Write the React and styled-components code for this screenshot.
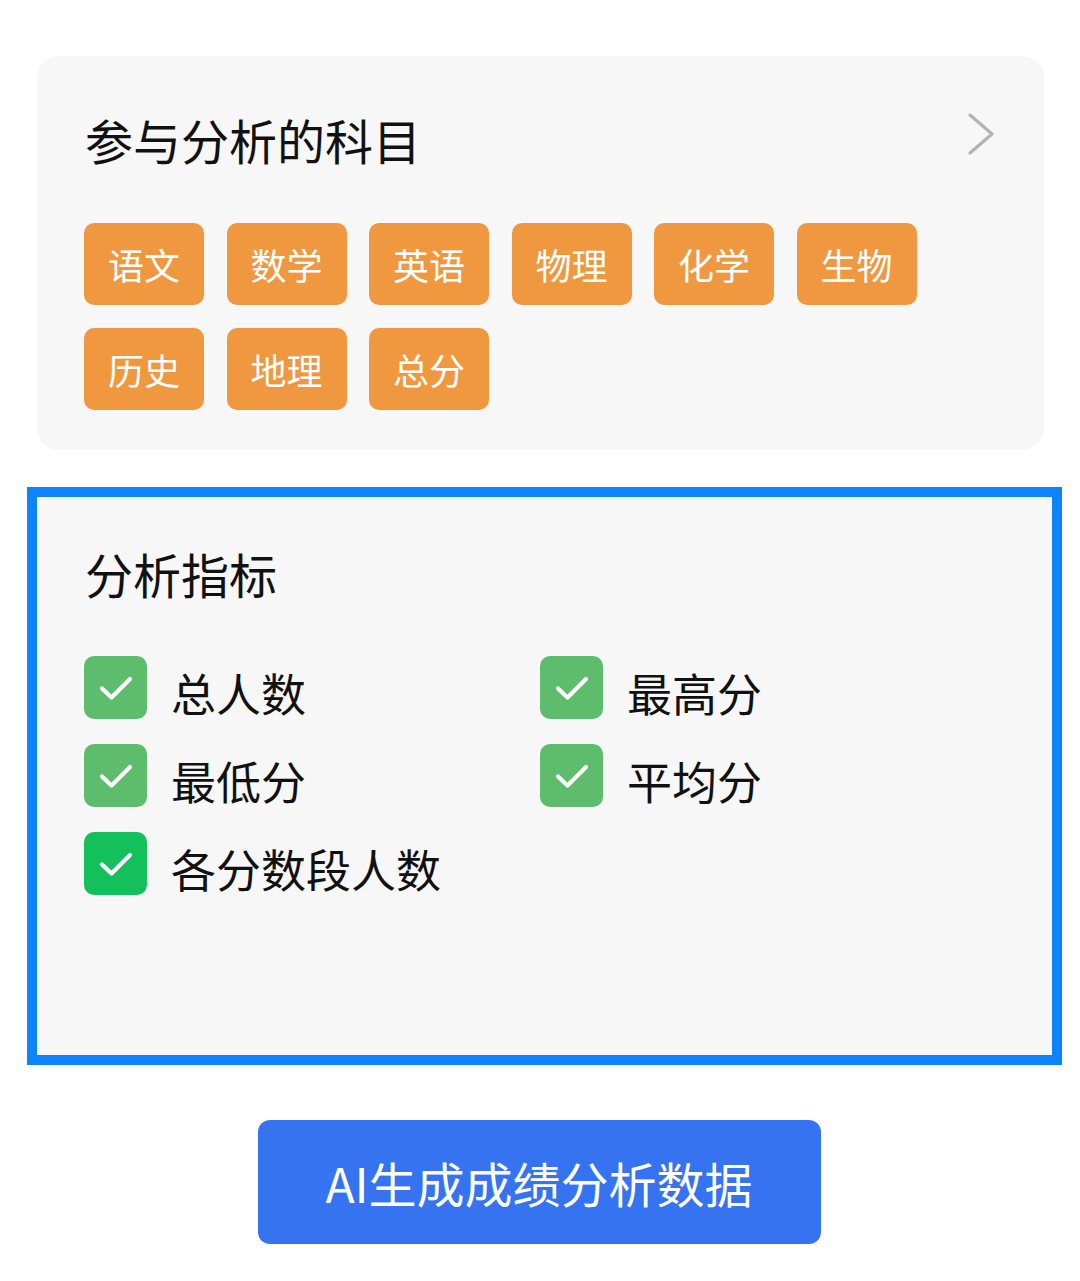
import styled, { createGlobalStyle } from "styled-components";

const subjects = ["语文", "数学", "英语", "物理", "化学", "生物", "历史", "地理", "总分"];
const metrics = [
  { label: "总人数" },
  { label: "最高分" },
  { label: "最低分" },
  { label: "平均分" },
  { label: "各分数段人数", strong: true },
];

function App() {
  return (
    <Page>
      <GlobalStyle />
      <SubjectCard>
        <TitleRow>
          <Title>参与分析的科目</Title>
          <Chevron viewBox="0 0 28 44">
            <path d="M3 3 L25 22 L3 41" fill="none" stroke="#b3b3b3" strokeWidth="3.2" strokeLinecap="round" strokeLinejoin="round" />
          </Chevron>
        </TitleRow>
        <TagList>
          {subjects.map((s) => (
            <Tag key={s}>{s}</Tag>
          ))}
        </TagList>
      </SubjectCard>

      <Highlight>
        <MetricCard>
          <Title>分析指标</Title>
          <MetricGrid>
            {metrics.map((m) => (
              <Metric key={m.label}>
                <Check $strong={m.strong}>
                  <svg width="36" height="28" viewBox="0 0 36 28">
                    <path d="M4 14.5 L13.5 23.5 L32 5" fill="none" stroke="#fff" strokeWidth="4.2" strokeLinecap="round" strokeLinejoin="round" />
                  </svg>
                </Check>
                <MetricLabel>{m.label}</MetricLabel>
              </Metric>
            ))}
          </MetricGrid>
        </MetricCard>
      </Highlight>

      <ButtonRow>
        <Generate>AI生成成绩分析数据</Generate>
      </ButtonRow>
    </Page>
  );
}

export default App;

const GlobalStyle = createGlobalStyle`
  body {
    margin: 0;
    background: #ffffff;
    font-family: "Noto Sans CJK SC", "Noto Sans", sans-serif;
  }
`;
const Page = styled.div`
  width: 1080px;
  min-height: 1281px;
  padding-top: 56px;
  box-sizing: border-box;
  background: #ffffff;
`;
const SubjectCard = styled.div`
  margin: 0 36px 0 37px;
  padding: 54px 49px 40px 47px;
  border-radius: 22px;
  background: #f7f7f7;
`;
const TitleRow = styled.div`
  display: flex;
  align-items: center;
  justify-content: space-between;
`;
const Title = styled.div`
  margin-left: 1px;
  font-size: 48px;
  line-height: 58px;
  color: #111111;
`;
const Chevron = styled.svg`
  width: 28px;
  height: 44px;
  margin-top: -10px;
`;
const TagList = styled.div`
  display: flex;
  flex-wrap: wrap;
  gap: 23px 22.5px;
  margin-top: 55px;
  width: 840px;
`;
const Tag = styled.div`
  width: 120px;
  height: 82px;
  display: flex;
  align-items: center;
  justify-content: center;
  border-radius: 10px;
  background: #f09840;
  color: #ffffff;
  font-size: 36px;
`;
const Highlight = styled.div`
  margin: 37px 18px 0 27px;
  border: 10px solid #0d83fc;
`;
const MetricCard = styled.div`
  min-height: 558px;
  padding: 47px 49px 0 47px;
  box-sizing: border-box;
  background: #f7f7f7;
`;
const MetricGrid = styled.div`
  display: grid;
  grid-template-columns: 456px 1fr;
  row-gap: 25px;
  margin-top: 54px;
`;
const Metric = styled.div`
  display: flex;
  align-items: flex-start;
  gap: 24px;
  height: 63px;
`;
const Check = styled.div`
  width: 63px;
  height: 63px;
  flex-shrink: 0;
  display: flex;
  align-items: center;
  justify-content: center;
  border-radius: 10px;
  background: ${(p) => (p.$strong ? "#14c05b" : "#5dbd6c")};
`;
const MetricLabel = styled.div`
  height: 63px;
  font-size: 45px;
  line-height: 73px;
  color: #111111;
  white-space: nowrap;
`;
const ButtonRow = styled.div`
  display: flex;
  justify-content: center;
  margin-top: 55px;
  padding-right: 2px;
`;
const Generate = styled.button`
  width: 563px;
  height: 124px;
  border: none;
  border-radius: 12px;
  background: #3673f1;
  color: #ffffff;
  font-family: "Noto Sans CJK SC", "Noto Sans", sans-serif;
  font-size: 48px;
  cursor: pointer;
`;
